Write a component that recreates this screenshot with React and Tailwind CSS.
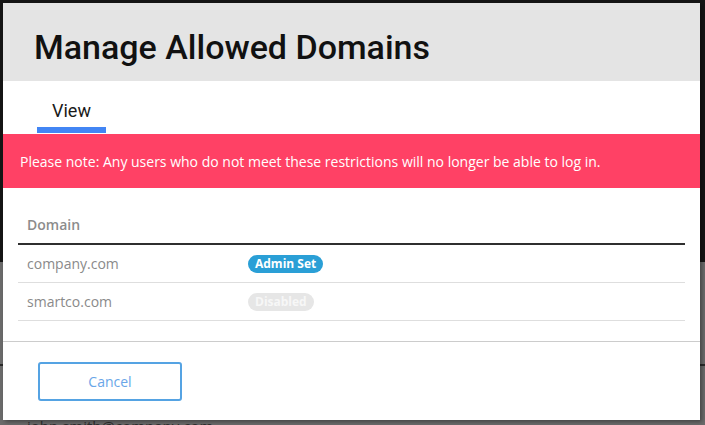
import React from "react";

const rows = [
  { domain: "company.com", badge: "Admin Set", active: true },
  { domain: "smartco.com", badge: "Disabled", active: false },
];

const App = () => {
  return (
    <div className="relative w-[705px] h-[425px] overflow-hidden bg-[#6b6b6b] font-['Open_Sans',sans-serif]">
      {/* page behind the dialog */}
      <div className="h-[262px] bg-[#151515]" />
      <div className="h-[104px] border-b-2 border-[#2a2a2a]" />
      <div className="pl-[27px] pt-[50px] text-[15px] leading-[20px] text-[#2e2e2e]">john.smith@company.com</div>

      {/* dialog */}
      <div className="absolute left-[3px] top-[3px] w-[697px] h-[417px] bg-white flex flex-col shadow-[2px_2px_4px_rgba(0,0,0,0.35)]">
        <div className="h-[78px] bg-[#e4e4e4] pl-[31px] pt-[27px]">
          <h1 className="text-[34px] leading-none font-medium text-[#111] font-['Roboto',sans-serif]">
            Manage Allowed Domains
          </h1>
        </div>

        <div className="pl-[34px] pt-[18px]">
          <div className="inline-flex flex-col">
            <span className="px-[15px] text-[18px] leading-[22px] text-[#1a1a1a] font-['Roboto',sans-serif]">
              View
            </span>
            <span className="mt-[5px] h-[6px] bg-[#4285f4]" />
          </div>
        </div>

        <div className="mt-[1px] h-[54px] bg-[#ff4165] px-[17px] flex items-center text-[14px] text-white">
          Please note: Any users who do not meet these restrictions will no longer be able to log in.
        </div>

        <div className="mx-[15px] pt-[27px]">
          <div className="pl-[9px] pb-[8px] border-b-2 border-[#2f2f2f] text-[14px] leading-[20px] font-semibold text-[#8c8c8c]">
            Domain
          </div>
          {rows.map((r) => (
            <div key={r.domain} className="flex items-center h-[38px] border-b border-[#dedede]">
              <div className="w-[230px] pl-[9px] text-[14px] text-[#8a8a8a]">{r.domain}</div>
              <span
                className={
                  r.active
                    ? "h-[18px] px-[7px] rounded-full bg-[#2a9fd6] text-white text-[12px] font-bold leading-[18px]"
                    : "h-[18px] px-[7px] rounded-full bg-[#e6e6e6] text-[#f7f7f7] text-[12px] font-bold leading-[18px]"
                }
              >
                {r.badge}
              </span>
            </div>
          ))}
        </div>

        <div className="mt-[20px] border-t border-[#cccccc] pl-[35px] pt-[20px]">
          <button className="w-[144px] h-[39px] rounded-[3px] border-2 border-[#55a3e3] text-[14px] text-[#6aa6e8] bg-white">
            Cancel
          </button>
        </div>
      </div>
    </div>
  );
};

export default App;
